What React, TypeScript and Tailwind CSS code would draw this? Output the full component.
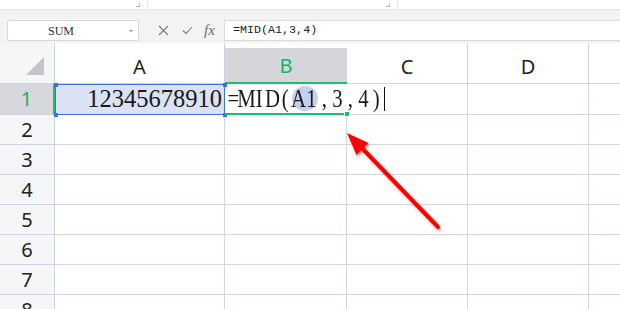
import React from "react";

const cols = ["A", "B", "C", "D", "E"];
const rows = [1, 2, 3, 4, 5, 6, 7, 8];

// half-width character cells, like the sheet's CJK serif font
function Chars({ text }: { text: string }) {
  return (
    <>
      {text.split("").map((c, i) => (
        <span key={i} className="w-[13px] shrink-0 flex justify-center">
          <span className="inline-block scale-x-[0.8]">{c}</span>
        </span>
      ))}
    </>
  );
}

function CornerMark() {
  return <div className="w-[4px] h-[4px] border-r border-b border-[#b8b8b8]" />;
}

function Toolbar() {
  return (
    <>
      {/* top strip */}
      <div className="h-[10px] flex border-b border-[#e4e4e4] bg-white">
        <div className="w-[148px] flex items-center justify-end pr-[7px] border-r border-[#e6e6e6]">
          <CornerMark />
        </div>
        <div className="w-[250px] flex items-center justify-end pr-[7px] border-r border-[#e6e6e6]">
          <CornerMark />
        </div>
        <div className="flex-1" />
      </div>

      {/* formula bar */}
      <div className="h-[33px] bg-[#f3f3f4] flex items-start pt-[10px]">
        <div className="ml-[7px] w-[132px] h-[21px] bg-white border border-[#d8d8d8] rounded-[2px] flex items-center">
          <span className="flex-1 text-center pr-[14px] text-[12px] text-[#333] font-['Liberation_Serif','DejaVu_Serif',serif]">
            SUM
          </span>
          <svg width="6" height="4" viewBox="0 0 6 4" className="mr-[4px]">
            <path d="M1 1 L3 3 L5 1 Z" fill="#888" />
          </svg>
        </div>
        <div className="w-[85px] h-[21px] flex items-center">
          <svg width="11" height="11" viewBox="0 0 11 11" className="ml-[19px]">
            <path d="M1 1 L10 10 M10 1 L1 10" stroke="#7a7a7a" strokeWidth="1.1" fill="none" />
          </svg>
          <svg width="11" height="9" viewBox="0 0 11 9" className="ml-[13px]">
            <path d="M1 4.5 L4 7.5 L10 1" stroke="#7a7a7a" strokeWidth="1.1" fill="none" />
          </svg>
          <span className="ml-[11px] text-[15px] italic leading-none text-[#6d6d6d] font-['Liberation_Serif','DejaVu_Serif',serif]">
            fx
          </span>
        </div>
        <div className="flex-1 h-[21px] bg-white border border-[#dcdcdc] border-r-0 flex items-center pl-[8px]">
          <span className="text-[11.7px] text-[#222] font-['Liberation_Mono','DejaVu_Sans_Mono',monospace]">
            =MID(A1,3,4)
          </span>
        </div>
      </div>
    </>
  );
}

function Arrow() {
  return (
    <svg width="620" height="309" viewBox="0 0 620 309" className="absolute left-0 top-0 pointer-events-none">
      <defs>
        <filter id="sh" x="-20%" y="-20%" width="140%" height="140%">
          <feDropShadow dx="1.5" dy="2" stdDeviation="1.5" floodColor="#000" floodOpacity="0.35" />
        </filter>
      </defs>
      <g filter="url(#sh)">
        <line x1="438" y1="227" x2="359" y2="145" stroke="#f00" strokeWidth="4" strokeLinecap="round" />
        <polygon points="347,133 356.5,155 368.5,143" fill="#f00" />
      </g>
    </svg>
  );
}

export default function App() {
  return (
    <div className="relative w-[620px] h-[309px] overflow-hidden bg-white">
      <Toolbar />

      <div className="grid w-[710px] grid-cols-[55px_170px_122px_121px_121px_121px] grid-rows-[41px_31px_30px_30px_30px_30px_30px_30px_30px] font-['Noto_Sans','DejaVu_Sans',sans-serif]">
        {/* header row */}
        <div className="bg-[#f5f6f8] border-r border-b border-[#cfd1e0] flex items-end justify-end pr-[10px] pb-[8px]">
          <svg width="18" height="18" viewBox="0 0 18 18">
            <polygon points="18,0 18,18 0,18" fill="#c3c5c9" />
          </svg>
        </div>
        {cols.map((c) =>
          c === "B" ? (
            <div key={c} className="pt-[5px] border-b-2 border-[#1dbb73] bg-white">
              <div className="h-full bg-[#d4d6da] flex items-center justify-center pt-[2px] text-[20px] text-[#1aae6c]">
                {c}
              </div>
            </div>
          ) : (
            <div
              key={c}
              className="bg-white border-r border-b border-[#cfd1e0] flex items-center justify-center pt-[8px] text-[20px] text-[#222]"
            >
              {c}
            </div>
          )
        )}

        {/* data rows */}
        {rows.map((r) =>
          r === 1 ? (
            <React.Fragment key={r}>
              <div className="bg-[#d6d8dc] border-r-2 border-b border-r-[#1dbb73] border-b-[#cfd1e0] flex items-center justify-center text-[20px] text-[#1aae6c]">
                1
              </div>
              <div className="relative bg-[#dbe2f4] border border-[#3f72d9] flex items-center justify-end pr-[2px] text-[24.5px] text-[#1a1a1a] font-['Liberation_Serif','DejaVu_Serif',serif]">
                12345678910
                <span className="absolute -left-[2px] -top-[2px] w-[4px] h-[4px] bg-[#3f72d9]" />
                <span className="absolute -right-[3px] -top-[2px] w-[4px] h-[4px] bg-[#3f72d9]" />
                <span className="absolute -left-[2px] -bottom-[3px] w-[4px] h-[4px] bg-[#3f72d9]" />
                <span className="absolute -right-[3px] -bottom-[3px] w-[4px] h-[4px] bg-[#3f72d9]" />
              </div>
              <div className="relative z-10 border-b-2 border-[#1dbb73] flex items-center pl-[2px] whitespace-nowrap text-[26px] leading-none text-[#1a1a1a] font-['Liberation_Serif','DejaVu_Serif',serif]">
                <Chars text="=MID(" />
                <span className="shrink-0 flex items-center h-[25px] bg-[#c6cfee] rounded-full">
                  <Chars text="A1" />
                </span>
                <Chars text=",3,4)" />
                <span className="shrink-0 w-[1px] h-[24px] bg-[#111] ml-[1px]" />
                <span className="absolute -right-[3px] -bottom-[4px] w-[6px] h-[6px] bg-[#1dbb73] border border-white" />
              </div>
              <div className="border-b border-r border-[#d3d5ea]" />
              <div className="border-b border-r border-[#d3d5ea]" />
              <div className="border-b border-r border-[#d3d5ea]" />
            </React.Fragment>
          ) : (
            <React.Fragment key={r}>
              <div className="bg-[#f5f6f8] border-r border-b border-[#cfd1e0] flex items-center justify-center text-[20px] text-[#222]">
                {r}
              </div>
              {cols.map((c) => (
                <div key={c} className="border-b border-r border-[#d3d5ea]" />
              ))}
            </React.Fragment>
          )
        )}
      </div>

      <Arrow />
    </div>
  );
}
